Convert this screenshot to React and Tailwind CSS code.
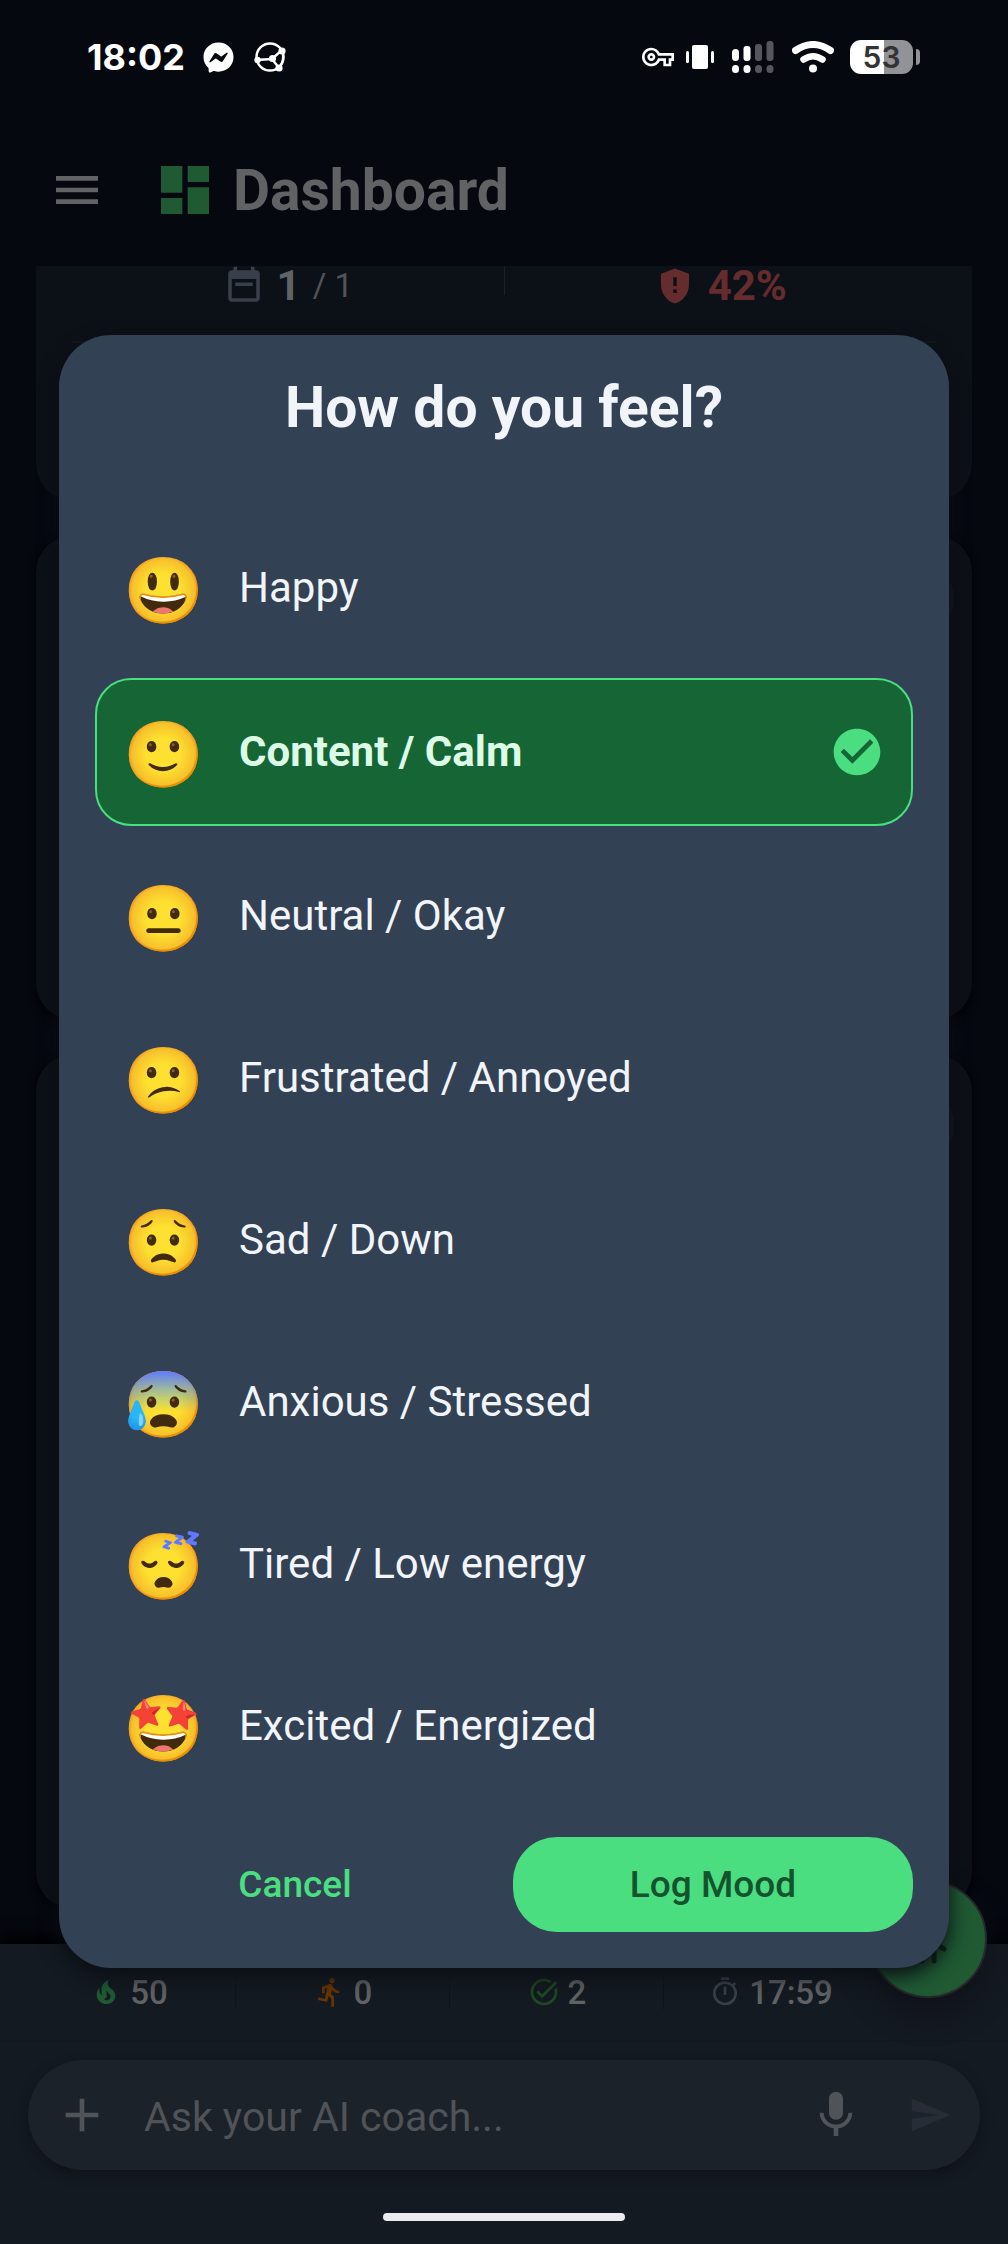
import { useState } from "react";
import {
  MdAdd,
  MdCheckCircle,
  MdDashboard,
  MdDirectionsRun,
  MdGppMaybe,
  MdMenu,
  MdMic,
  MdOutlineTimer,
  MdOutlineVpnKey,
  MdSend,
  MdTaskAlt,
} from "react-icons/md";
import { FaFacebookMessenger } from "react-icons/fa6";

const MOODS = [
  { id: "happy", emoji: "😃", label: "Happy" },
  { id: "content", emoji: "🙂", label: "Content / Calm" },
  { id: "neutral", emoji: "😐", label: "Neutral / Okay" },
  { id: "frustrated", emoji: "😕", label: "Frustrated / Annoyed" },
  { id: "sad", emoji: "😟", label: "Sad / Down" },
  { id: "anxious", emoji: "😰", label: "Anxious / Stressed" },
  { id: "tired", emoji: "😴", label: "Tired / Low energy" },
  { id: "excited", emoji: "🤩", label: "Excited / Energized" },
];

const STATS = [
  { id: "streak", icon: FlameIcon, color: "text-[#1f5a33]", value: "50" },
  { id: "activity", icon: MdDirectionsRun, color: "text-[#663500]", value: "0" },
  { id: "done", icon: MdTaskAlt, color: "text-[#1e4a20]", value: "2" },
  { id: "time", icon: MdOutlineTimer, color: "text-[#3a404b]", value: "17:59" },
];

function FlameIcon({ className }) {
  return (
    <svg viewBox="0 0 24 24" className={className} fill="currentColor">
      <path d="M17.66 11.2C17.43 10.9 17.15 10.64 16.89 10.38C16.22 9.78 15.46 9.35 14.82 8.72C13.33 7.26 13 4.85 13.95 3C13 3.23 12.17 3.75 11.46 4.32C8.87 6.4 7.85 10.07 9.07 13.22C9.11 13.32 9.15 13.42 9.15 13.55C9.15 13.77 9 13.97 8.8 14.05C8.57 14.15 8.33 14.09 8.14 13.93C8.08 13.88 8.04 13.83 8 13.76C6.87 12.33 6.69 10.28 7.45 8.64C5.78 10 4.87 12.3 5 14.47C5.06 14.97 5.12 15.47 5.29 15.97C5.43 16.57 5.7 17.17 6 17.7C7.08 19.43 8.95 20.67 10.96 20.92C13.1 21.19 15.39 20.8 17.03 19.32C18.86 17.66 19.5 15 18.56 12.72L18.43 12.46C18.22 12 17.66 11.2 17.66 11.2M14.5 17.5C14.22 17.74 13.76 18 13.4 18.1C12.28 18.5 11.16 17.94 10.5 17.28C11.69 17 12.4 16.12 12.61 15.23C12.78 14.43 12.46 13.77 12.33 13C12.21 12.26 12.23 11.63 12.5 10.94C12.69 11.32 12.89 11.7 13.13 12C13.9 13 15.11 13.44 15.37 14.8C15.41 14.94 15.43 15.08 15.43 15.23C15.46 16.05 15.1 16.95 14.5 17.5Z" />
    </svg>
  );
}

// Calendar with one line in the body
function CalendarIcon({ className }) {
  return (
    <svg viewBox="0 0 24 24" className={className} fill="currentColor">
      <path d="M17 10H7v2h10v-2zm2-7h-1V1h-2v2H8V1H6v2H5c-1.11 0-1.99.9-1.99 2L3 19c0 1.1.89 2 2 2h14c1.1 0 2-.9 2-2V5c0-1.1-.9-2-2-2zm0 16H5V8h14v11z" />
    </svg>
  );
}

function NetworkIcon() {
  return (
    <svg viewBox="0 0 32 32" className="h-8 w-8" fill="none" stroke="currentColor" strokeWidth="2.4">
      <circle cx="16" cy="16" r="13.5" />
      <path d="M2 19 18 18l10-9M18 18l7 9M28 9c2 6 1 13-3 18" />
      <g fill="currentColor" stroke="none">
        <circle cx="3.5" cy="19" r="3.2" />
        <circle cx="18.5" cy="17.5" r="3.6" />
        <circle cx="28" cy="10" r="3.6" />
        <circle cx="25" cy="27" r="3.6" />
      </g>
    </svg>
  );
}

function VibrateIcon() {
  return (
    <svg viewBox="0 0 28 24" className="h-6 w-7" fill="currentColor">
      <rect x="6" y="0" width="16" height="24" rx="2" />
      <rect x="0" y="6" width="3" height="12" rx="1.5" />
      <rect x="25" y="6" width="3" height="12" rx="1.5" />
    </svg>
  );
}

function SignalIcon() {
  return (
    <svg viewBox="0 0 42 32" className="h-8 w-[42px]" fill="currentColor">
      <rect x="0" y="8" width="7" height="12" rx="3.5" />
      <rect x="11.5" y="5" width="7" height="15" rx="3" />
      <rect x="0" y="24" width="7" height="8" rx="3.5" />
      <rect x="11.5" y="24" width="7" height="8" rx="3.5" />
      <g fill="#56575c">
        <rect x="23" y="3" width="7" height="17" rx="3" />
        <rect x="34.5" y="0" width="7" height="20" rx="3" />
        <rect x="23" y="24" width="7" height="8" rx="3.5" />
        <rect x="34.5" y="24" width="7" height="8" rx="3.5" />
      </g>
    </svg>
  );
}

function WifiIcon() {
  return (
    <svg viewBox="0 0 42 32" className="h-8 w-[42px]" fill="none" stroke="currentColor" strokeLinecap="round">
      <path d="M3.5 9.5Q21-2.5 38.5 9.5" strokeWidth="7" />
      <path d="M11.5 18.5Q21 12 30.5 18.5" strokeWidth="6.5" />
      <circle cx="21" cy="27.5" r="4" fill="currentColor" stroke="none" />
    </svg>
  );
}

function StatusBar() {
  return (
    <div className="flex h-[114px] items-center justify-between pl-[87px] pr-[88px] text-white">
      <div className="flex items-center">
        <span className="font-['Inter',sans-serif] text-[36px] leading-none font-bold">18:02</span>
        <FaFacebookMessenger className="ml-[18px] h-[31px] w-[31px]" />
        <span className="ml-5">
          <NetworkIcon />
        </span>
      </div>
      <div className="flex items-center">
        <MdOutlineVpnKey className="h-8 w-8" />
        <span className="ml-3">
          <VibrateIcon />
        </span>
        <span className="ml-[18px]">
          <SignalIcon />
        </span>
        <span className="ml-[18px]">
          <WifiIcon />
        </span>
        <div className="ml-4 flex h-[34px] w-[63px] items-center justify-center rounded-[11px] bg-linear-to-r from-white from-54% to-[#929397] to-54% font-['Inter',sans-serif] text-[30px] leading-none font-semibold text-[#333333]">
          53
        </div>
        <div className="ml-[3px] h-4 w-1 rounded-r-sm bg-[#929397]" />
      </div>
    </div>
  );
}

function Header() {
  return (
    <header className="flex h-[152px] items-center pl-[49px]">
      <button type="button" aria-label="Open menu" className="text-[#616264]">
        <MdMenu className="h-14 w-14" />
      </button>
      <MdDashboard className="ml-12 h-16 w-16 text-[#1f5a33]" />
      <h1 className="ml-4 text-[57px] leading-none font-bold text-[#616264]">Dashboard</h1>
    </header>
  );
}

function Cards() {
  return (
    <main className="flex flex-1 flex-col gap-9 px-9 pb-9">
      <section className="h-[234px] rounded-b-[36px] bg-[#0c1017] px-9">
        <div className="flex h-[77px] items-start border-b-2 border-[#12161e]">
          <div className="flex h-10 flex-1 basis-0 items-center justify-center text-[#616264]">
            <CalendarIcon className="h-[42px] w-[42px] text-[#3a404b]" />
            <span className="ml-3 text-[42px] leading-10 font-bold">1</span>
            <span className="ml-3 text-[33px] leading-10 text-[#505357]">/ 1</span>
          </div>
          <div className="h-[29px] w-px bg-[#1c2028]" />
          <div className="flex h-10 flex-1 basis-0 items-center justify-center text-[#642c2c]">
            <MdGppMaybe className="h-[42px] w-[42px]" />
            <span className="ml-3 text-[42px] leading-10 font-bold">42%</span>
          </div>
        </div>
      </section>
      <section className="flex h-[483px] justify-end rounded-[36px] bg-[#0c1017] px-[18px] pt-[21px] shadow-[0_3px_8px_#020306]">
        <div className="h-[84px] w-[84px] rounded-full bg-[#12161e]" />
      </section>
      <section className="flex h-[853px] justify-end rounded-[36px] bg-[#0c1017] px-[18px] pt-[29px] shadow-[0_3px_8px_#020306]">
        <div className="h-[84px] w-[84px] rounded-full bg-[#12161e]" />
      </section>
    </main>
  );
}

function BottomBar() {
  return (
    <footer className="bg-[#141a21] shadow-[0_-8px_14px_#000000]">
      <div className="flex h-[97px] items-center border-b border-[#13171e] pr-[130px] pl-[22px]">
        {STATS.map((stat, i) => (
          <div key={stat.id} className="relative flex flex-1 items-center justify-center gap-2">
            <stat.icon className={`h-8 w-8 ${stat.color}`} />
            <span className="text-[33px] leading-none font-medium text-[#616264]">{stat.value}</span>
            {i < STATS.length - 1 ? (
              <span className="absolute right-0 h-[35px] w-px bg-[#10141b]" />
            ) : null}
          </div>
        ))}
      </div>
      <form
        onSubmit={(e) => e.preventDefault()}
        className="mx-7 mt-[19px] flex h-[110px] items-center rounded-full bg-[#1c2229] pr-7 pl-[26px] shadow-[0_5px_12px_#10131a]"
      >
        <button type="button" aria-label="Add attachment" className="text-[#505357]">
          <MdAdd className="h-14 w-14" />
        </button>
        <input
          type="text"
          aria-label="Ask your AI coach"
          placeholder="Ask your AI coach..."
          className="ml-[34px] min-w-0 flex-1 bg-transparent pt-1 text-[41px] leading-[56px] outline-none placeholder:text-[#505357]"
        />
        <button type="button" aria-label="Voice input" className="text-[#505357]">
          <MdMic className="h-14 w-14" />
        </button>
        <button type="submit" aria-label="Send" className="ml-11 text-[#272c37]">
          <MdSend className="h-11 w-11" />
        </button>
      </form>
      <div className="mx-auto mt-[43px] h-2 w-[242px] rounded-full bg-[#ececee]" />
      <div className="h-[23px]" />
    </footer>
  );
}

function CoachButton() {
  return (
    <button
      type="button"
      aria-label="Quick log"
      className="absolute right-[21px] bottom-[246px] h-[118px] w-[118px] rounded-full border-2 border-[#26292a] bg-[#1f5a33] shadow-[0_16px_28px_#10121a]"
    >
      <svg viewBox="0 0 114 114" className="h-full w-full" fill="none" stroke="#0a2413" strokeWidth="5" strokeLinecap="round">
        <path d="M63 50v29M63 61l10 6M50 79h1" />
      </svg>
    </button>
  );
}

function MoodDialog() {
  const [mood, setMood] = useState("content");

  return (
    <div className="absolute inset-0 flex items-center justify-center px-[59px] pt-[59px]">
      <div
        role="dialog"
        aria-modal="true"
        aria-labelledby="mood-title"
        className="w-full rounded-[52px] bg-[#334155] px-9 py-9 shadow-[0_8px_20px_#0b0e14]"
      >
        <h2 id="mood-title" className="text-center text-[57px] leading-[74px] font-bold text-[#f1f5f9]">
          How do you feel?
        </h2>
        <div role="radiogroup" aria-labelledby="mood-title" className="mt-[71px] flex flex-col gap-[18px]">
          {MOODS.map((item) => {
            const selected = item.id === mood;
            return (
              <label
                key={item.id}
                className={`relative flex cursor-pointer items-center rounded-[36px] px-[26px] text-[42px] ${
                  selected
                    ? "h-[148px] border-2 border-[#4ade80] bg-[#166534] font-bold text-[#dcfce7]"
                    : "h-36 border-2 border-transparent text-[#f1f5f9]"
                }`}
              >
                <input
                  type="radio"
                  name="mood"
                  value={item.id}
                  checked={selected}
                  onChange={() => setMood(item.id)}
                  className="sr-only"
                />
                <span className="w-20 pt-1.5 text-[65px] leading-none font-normal">{item.emoji}</span>
                <span className="ml-9 flex-1 leading-[56px]">{item.label}</span>
                {selected ? <MdCheckCircle className="h-14 w-14 text-[#4ade80]" /> : null}
              </label>
            );
          })}
        </div>
        <div className="mt-[39px] flex gap-[18px]">
          <button type="button" className="h-[95px] flex-1 rounded-[44px] text-[37px] font-medium text-[#4ade80]">
            Cancel
          </button>
          <button
            type="button"
            className="h-[95px] flex-1 rounded-[44px] bg-[#4ade80] text-[37px] font-medium text-[#14532d]"
          >
            Log Mood
          </button>
        </div>
      </div>
    </div>
  );
}

export default function App() {
  return (
    <div className="relative flex min-h-screen flex-col bg-[#05080f] font-['Roboto',sans-serif]">
      <StatusBar />
      <Header />
      <Cards />
      <BottomBar />
      <CoachButton />
      <MoodDialog />
    </div>
  );
}
